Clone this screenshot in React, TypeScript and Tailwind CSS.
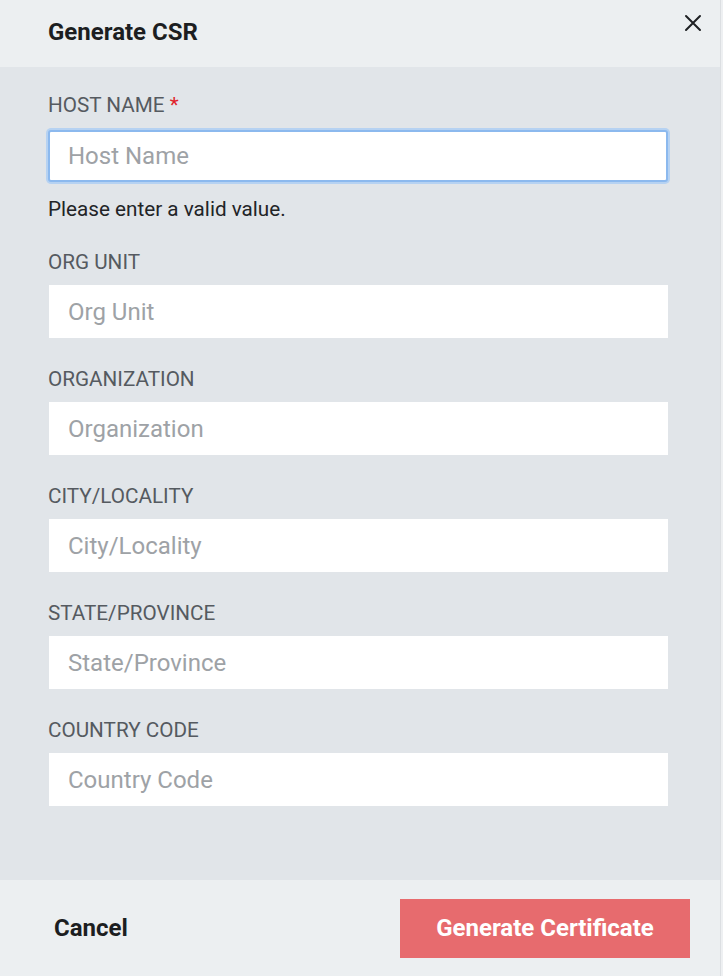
import React from 'react';

const fields = [
  { label: 'ORG UNIT', placeholder: 'Org Unit' },
  { label: 'ORGANIZATION', placeholder: 'Organization' },
  { label: 'CITY/LOCALITY', placeholder: 'City/Locality' },
  { label: 'STATE/PROVINCE', placeholder: 'State/Province' },
  { label: 'COUNTRY CODE', placeholder: 'Country Code' },
];

const CloseIcon = () => (
  <svg width="18" height="18" viewBox="0 0 18 18" fill="none" stroke="#1f2124" strokeWidth="2" strokeLinecap="round">
    <path d="M2 2L16 16M16 2L2 16" />
  </svg>
);

const App = () => {
  return (
    <div className="flex w-[723px] h-[976px] font-['Roboto',sans-serif]">
      <div className="flex-1 flex flex-col">
        <div className="h-[67px] bg-[#eceff1] flex justify-between pl-[48px] pr-[18px]">
          <h2 className="text-[24px] font-bold text-[#1c1e21] self-center mb-[4px]">Generate CSR</h2>
          <button className="mt-[14px] self-start">
            <CloseIcon />
          </button>
        </div>

        <div className="flex-1 bg-[#e1e5e9] pl-[48px] pr-[52px] pt-[26px]">
          <label className="block text-[20.7px] leading-[24px] text-[#555a60]">
            HOST NAME <span className="text-[#e0242b]">*</span>
          </label>
          <input
            placeholder="Host Name"
            className="mt-[13px] block w-full h-[52px] bg-white border-2 border-[#8cb9ee] rounded-[3px] ring-2 ring-[#b6d2f2] px-[18px] text-[24px] outline-none placeholder:text-[#9ea2a6]"
          />
          <p className="mt-[15px] text-[20.7px] leading-[24px] text-[#222427]">Please enter a valid value.</p>

          {fields.map((f) => (
            <div key={f.label} className="mt-[29px] ml-[1px]">
              <label className="block -ml-[1px] text-[20.7px] leading-[24px] text-[#555a60]">{f.label}</label>
              <input
                placeholder={f.placeholder}
                className="mt-[11px] block w-full h-[53px] bg-white px-[19px] text-[24px] outline-none placeholder:text-[#9ea2a6]"
              />
            </div>
          ))}
        </div>

        <div className="h-[96px] bg-[#eceff1] flex items-center justify-between pl-[54px] pr-[30px]">
          <button className="text-[24px] font-bold text-[#1c1e21]">Cancel</button>
          <button className="w-[290px] h-[59px] bg-[#e76b6e] text-white text-[24px] font-bold">
            Generate Certificate
          </button>
        </div>
      </div>
      <div className="w-[3px] bg-[#eef0f2] border-l border-[#dcdfe2]" />
    </div>
  );
};

export default App;
